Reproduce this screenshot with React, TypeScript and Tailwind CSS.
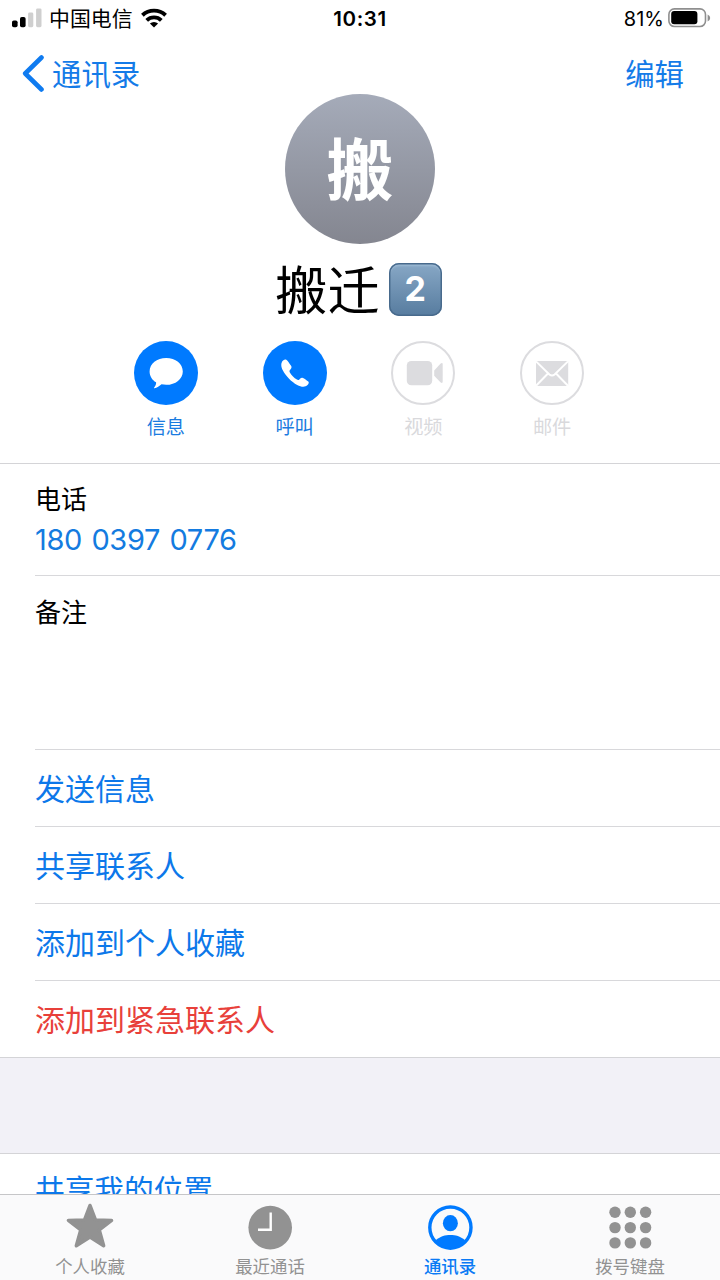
import type { ReactNode } from "react";

function SignalIcon() {
  return (
    <svg width="30" height="20" viewBox="0 0 30 20">
      <rect x="0" y="12.4" width="5.6" height="6.8" rx="1.8" fill="#000" />
      <rect x="8" y="9" width="5.6" height="10.2" rx="1.8" fill="#000" />
      <rect x="16.1" y="4.6" width="5.2" height="14.6" rx="1.4" fill="#cfcfcf" />
      <rect x="24.1" y="0.4" width="5.4" height="18.8" rx="1.4" fill="#cfcfcf" />
    </svg>
  );
}

function WifiIcon() {
  return (
    <svg width="26" height="20" viewBox="0 0 26 20" fill="none" stroke="#000" strokeWidth="3.9">
      <path d="M1.4 7.2 A17 17 0 0 1 24.6 7.2" />
      <path d="M5.7 12.3 A10.6 10.6 0 0 1 20.3 12.3" />
      <path d="M13 19.4 L8.9 15.6 A6 6 0 0 1 17.1 15.6 Z" fill="#000" stroke="none" />
    </svg>
  );
}

function BatteryIcon() {
  return (
    <svg width="43" height="20" viewBox="0 0 43 20">
      <rect x="0.9" y="0.9" width="36.6" height="17.6" rx="5.5" fill="#fff" stroke="#8f8f8f" strokeWidth="1.6" />
      <rect x="3.2" y="3.1" width="26.2" height="13.2" rx="3" fill="#000" />
      <path d="M39.6 6.4 Q42.2 7.4 42.2 9.9 Q42.2 12.4 39.6 13.4 Z" fill="#8f8f8f" />
    </svg>
  );
}

function MessageIcon() {
  return (
    <svg width="64" height="64" viewBox="0 0 64 64" fill="#fff">
      <path d="M32.2 17 C41.5 17 48.8 22.8 48.8 30.4 C48.8 38 41.5 43.8 32.2 43.8 C30.6 43.8 29 43.6 27.5 43.3 C25.5 45.2 22.9 46.9 20.4 47.2 C20 47.3 19.8 46.8 20.2 46.4 C21.4 45 22.3 43.2 22.1 41.3 C18.1 39 15.6 35 15.6 30.4 C15.6 22.8 22.9 17 32.2 17 Z" />
    </svg>
  );
}

function PhoneIcon() {
  return (
    <svg width="64" height="64" viewBox="0 0 64 64" fill="#fff">
      <path d="M20.1 19.4 C21.1 18.6 22.5 18.1 23.3 18.7 C24.9 19.9 26.4 22.4 27.9 24.5 C29 26.1 28.6 27.2 27.4 28.6 C26.3 29.8 26.2 30.4 27 31.7 C28.7 34.4 31 36.7 33.9 38.6 C34.9 39.3 35.6 39.2 36.6 38.2 C38.1 36.7 39.3 36.4 41 37.4 C42.7 38.5 44.4 39.7 45.3 40.6 C46.3 41.7 45.5 43.1 44.5 44.1 C42.2 46.3 38.4 46.2 34.2 43.9 C28.2 40.7 22.8 34.9 19.8 29.2 C17.8 25.5 17.7 21.5 20.1 19.4 Z" />
    </svg>
  );
}

function VideoIcon() {
  return (
    <svg width="64" height="64" viewBox="0 0 64 64" fill="#dcdcdf">
      <rect x="15.8" y="20" width="25.4" height="24.2" rx="4.5" />
      <path d="M43.2 29.4 L49.4 22.7 Q51.7 21 51.7 23.5 V40.5 Q51.7 43 49.4 41.3 L43.2 34.8 Z" />
    </svg>
  );
}

function MailIcon() {
  return (
    <svg width="64" height="64" viewBox="0 0 64 64">
      <rect x="16" y="20" width="32.2" height="25" rx="1" fill="#dcdcdf" />
      <path d="M16 20.4 L29.4 33.4 Q32 35.6 34.6 33.4 L48 20.4 M16 44.8 L28.2 32.2 M48 44.8 L35.8 32.2" fill="none" stroke="#fff" strokeWidth="2" />
    </svg>
  );
}

function StarIcon() {
  return (
    <svg width="50" height="48" viewBox="0 0 50 48">
      <path d="M25 3.4 L30.6 18 L46.6 18.4 L34.3 28 L38.7 43.8 L25 35 L11.3 43.8 L15.7 28 L3.4 18.4 L19.4 18 Z" fill="#929292" stroke="#929292" strokeWidth="3.4" strokeLinejoin="round" />
    </svg>
  );
}

function ClockIcon() {
  return (
    <svg width="50" height="48" viewBox="0 0 50 48">
      <circle cx="25.2" cy="25.6" r="21.8" fill="#929292" />
      <path d="M25.7 10.5 V27.8 H13" fill="none" stroke="#fff" strokeWidth="2.4" />
    </svg>
  );
}

function PersonIcon() {
  return (
    <svg width="50" height="48" viewBox="0 0 50 48">
      <circle cx="25.4" cy="25.6" r="20.6" fill="#fafafa" stroke="#007aff" strokeWidth="3.4" />
      <ellipse cx="25.4" cy="21.2" rx="7.5" ry="8.1" fill="#007aff" />
      <path d="M10.6 38.2 C16 34 20 32.9 25.4 32.9 C30.8 32.9 34.8 34 40.2 38.2 C36.4 43.2 31.4 45.8 25.4 45.8 C19.4 45.8 14.4 43.2 10.6 38.2 Z" fill="#007aff" />
    </svg>
  );
}

function KeypadIcon() {
  const steps = [0, 15.3, 30.6];
  return (
    <svg width="50" height="48" viewBox="0 0 50 48" fill="#929292">
      {steps.map((y) => steps.map((x) => <circle key={`${x}-${y}`} cx={10 + x} cy={10.3 + y} r="5.7" />))}
    </svg>
  );
}

function Action({ label, icon, enabled = false }: { label: string; icon: ReactNode; enabled?: boolean }) {
  return (
    <div className="flex flex-col items-center">
      <div
        className={
          enabled
            ? "flex size-[64px] items-center justify-center rounded-full bg-[#007aff]"
            : "flex size-[64px] items-center justify-center rounded-full border-2 border-[#dcdcdf]"
        }
      >
        <span className="shrink-0">{icon}</span>
      </div>
      <span className={enabled ? "mt-[8px] text-[19.2px] leading-[28px] text-[#1a7be0]" : "mt-[8px] text-[19.2px] leading-[28px] text-[#d9d9dc]"}>
        {label}
      </span>
    </div>
  );
}

function Row({ label, danger = false, last = false }: { label: string; danger?: boolean; last?: boolean }) {
  return (
    <div className={last ? "flex h-[76px] items-center pt-px" : "flex h-[77px] items-center border-b border-[#d8d8db] pt-px"}>
      <span className={danger ? "text-[#e8403a]" : "text-[#0c78ea]"}>{label}</span>
    </div>
  );
}

function Tab({ label, icon, active = false }: { label: string; icon: ReactNode; active?: boolean }) {
  return (
    <div className={active ? "flex flex-col items-center font-medium text-[#0a7af5]" : "flex flex-col items-center text-[#929292]"}>
      <div className="mt-[7px] h-[48px]">{icon}</div>
      <span className="mt-[4px] text-[17.4px] leading-[26px]">{label}</span>
    </div>
  );
}

export default function App() {
  return (
    <div className="flex h-[1280px] w-[720px] flex-col overflow-hidden bg-white font-[Inter,'Noto_Sans_CJK_SC',sans-serif] text-black">
      <div className="grid h-[36px] shrink-0 grid-cols-[1fr_auto_1fr] items-center pr-[9px] pl-[12px]">
        <div className="flex items-center">
          <SignalIcon />
          <span className="ml-[7px] pt-[2px] text-[20.9px] leading-[30px]">中国电信</span>
          <span className="ml-[8px]">
            <WifiIcon />
          </span>
        </div>
        <span className="mr-[3px] pt-px text-[20.5px] leading-[34px] font-semibold tracking-[0.6px]">10:31</span>
        <div className="flex items-center justify-end gap-[4px]">
          <span className="pt-px text-[20px] leading-[34px]">81%</span>
          <BatteryIcon />
        </div>
      </div>

      <div className="flex h-[58px] shrink-0 items-start justify-between pr-[36px] pl-[22px] text-[29.4px] leading-[44px] text-[#147be8]">
        <div className="flex">
          <svg className="mt-[15px]" width="24" height="44" viewBox="0 0 24 44" fill="none" stroke="#0f7bf0" strokeWidth="4.6" strokeLinecap="round" strokeLinejoin="round">
            <path d="M19.5 6.5 L3.2 22.5 L19.5 38.5" />
          </svg>
          <span className="ml-[6px] pt-[17px]">通讯录</span>
        </div>
        <span className="pt-[17px]">编辑</span>
      </div>

      <div className="flex h-[370px] shrink-0 flex-col items-center border-b border-[#d4d4d7]">
        <div className="flex size-[150px] items-center justify-center rounded-full bg-linear-to-b from-[#a5abb9] to-[#848690] text-[67px] leading-[150px] font-bold text-white">
          <span className="pt-[2px] leading-none">搬</span>
        </div>
        <div className="mt-[6px] mr-[3px] flex h-[78px] items-center gap-[9px]">
          <span className="pt-[4px] text-[52.2px] leading-[78px]">搬迁</span>
          <span className="flex size-[53px] items-center justify-center rounded-[10px] bg-linear-to-b from-[#88a8c6] to-[#577c9f] text-[34px] leading-none font-bold text-white shadow-[inset_0_0_0_1.5px_#486a8c,inset_0_3px_2px_#9dbad4]">
            2
          </span>
        </div>
        <div className="mt-[13px] mr-[2px] grid w-[515px] grid-cols-4">
          <Action label="信息" icon={<MessageIcon />} enabled />
          <Action label="呼叫" icon={<PhoneIcon />} enabled />
          <Action label="视频" icon={<VideoIcon />} />
          <Action label="邮件" icon={<MailIcon />} />
        </div>
      </div>

      <div className="shrink-0 pl-[35px] text-[30px] leading-[44px]">
        <div className="flex h-[112px] flex-col border-b border-[#d8d8db] pt-[16px]">
          <span className="text-[26px] leading-[40px]">电话</span>
          <span className="text-[29px] leading-[40px] tracking-[-0.35px] text-[#147be0] [word-spacing:1.6px]">180 0397 0776</span>
        </div>
        <div className="h-[174px] border-b border-[#d8d8db] pt-[17px] text-[26px] leading-[40px]">备注</div>
        <Row label="发送信息" />
        <Row label="共享联系人" />
        <Row label="添加到个人收藏" />
        <Row label="添加到紧急联系人" danger last />
      </div>

      <div className="h-[97px] shrink-0 border-y border-[#d4d4d7] bg-[#f2f1f7]" />
      <div className="h-[40px] shrink-0 overflow-hidden pt-[14px] pl-[35px] text-[29.7px] leading-[44px] text-[#0c78ea]">
        共享我的位置
      </div>

      <div className="grid h-[87px] shrink-0 grid-cols-4 border-t border-[#c6c6c8] bg-[#fafafb]">
        <Tab label="个人收藏" icon={<StarIcon />} />
        <Tab label="最近通话" icon={<ClockIcon />} />
        <Tab label="通讯录" icon={<PersonIcon />} active />
        <Tab label="拨号键盘" icon={<KeypadIcon />} />
      </div>
    </div>
  );
}
